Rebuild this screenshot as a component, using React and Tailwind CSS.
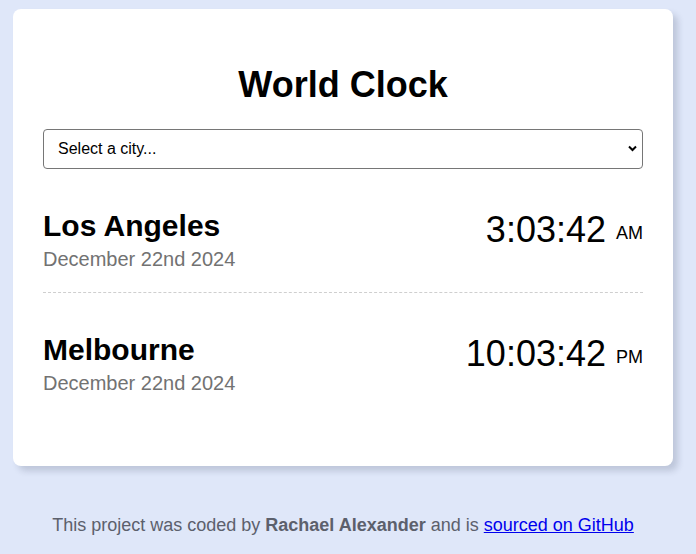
import { useState } from "react";

const cities = [
  { name: "Los Angeles", date: "December 22nd 2024", time: "3:03:42", period: "AM" },
  { name: "Melbourne", date: "December 22nd 2024", time: "10:03:42", period: "PM" },
];

const CityRow = ({ city, last }) => {
  return (
    <div className={`flex justify-between items-start pt-[40px] pb-[21px] ${last ? "" : "border-b border-dashed border-[#cfcfcf]"}`}>
      <div>
        <h2 className="text-[30px] leading-[34px] font-bold text-black">{city.name}</h2>
        <div className="mt-[5px] text-[20px] leading-[23px] text-[#727272]">{city.date}</div>
      </div>
      <div className="text-[36px] leading-[41px] text-black">
        {city.time} <span className="text-[18px] align-[3px]">{city.period}</span>
      </div>
    </div>
  );
};

const App = () => {
  const [selected, setSelected] = useState("");

  return (
    <div className="min-h-screen w-full bg-[#dfe7f9] pt-[9px] font-['Liberation_Sans',Arial,sans-serif]">
      <div className="ml-[13px] w-[660px]">
        <div className="bg-white rounded-lg px-[30px] pt-[55px] pb-[50px] shadow-[5px_5px_6px_rgba(40,50,80,0.18)]">
          <h1 className="text-center text-[36px] leading-[41px] font-bold text-black">World Clock</h1>
          <div className="relative mt-6">
            <select
              value={selected}
              onChange={(e) => setSelected(e.target.value)}
              className="w-full h-10 appearance-none rounded border border-[#767676] bg-white pl-[14px] pr-8 text-[16px] text-black"
            >
              <option value="">Select a city...</option>
              <option value="current">My current location</option>
              <option value="Europe/Paris">Paris</option>
              <option value="Asia/Tokyo">Tokyo</option>
              <option value="Australia/Sydney">Sydney</option>
            </select>
            <svg className="pointer-events-none absolute right-[6px] top-[16px]" width="9" height="7" viewBox="0 0 9 7">
              <path d="M1 1.5 L4.5 5 L8 1.5" fill="none" stroke="#000" strokeWidth="2" />
            </svg>
          </div>
          <div>
            {cities.map((city, i) => (
              <CityRow key={city.name} city={city} last={i === cities.length - 1} />
            ))}
          </div>
        </div>
        <footer className="mt-[49px] text-center text-[18px] leading-[21px] text-[#5c606c]">
          This project was coded by <strong className="font-bold">Rachael Alexander</strong> and is{" "}
          <a href="#" className="text-[#0000ee] underline">
            sourced on GitHub
          </a>
        </footer>
      </div>
    </div>
  );
};

export default App;
